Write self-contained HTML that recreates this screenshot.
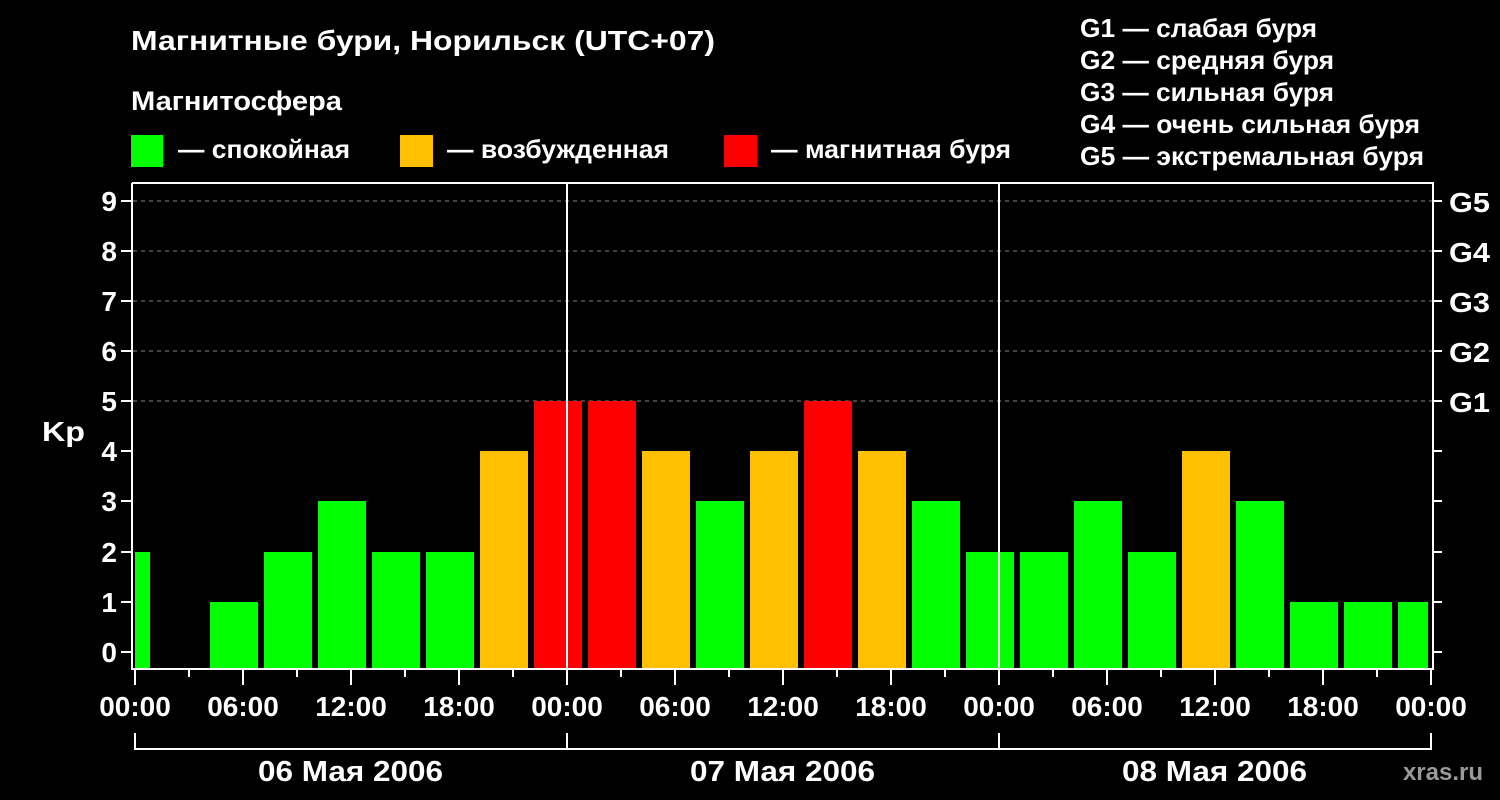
<!DOCTYPE html><html><head><meta charset="utf-8"><style>body{margin:0;background:#000;}svg{display:block}text{font-family:"Liberation Sans",sans-serif;font-weight:bold;fill:#fff}</style></head><body>
<svg width="1500" height="800" viewBox="0 0 1500 800" xmlns="http://www.w3.org/2000/svg">
<rect width="1500" height="800" fill="#000"/>
<text x="131" y="50" font-size="28" textLength="584" lengthAdjust="spacingAndGlyphs">Магнитные бури, Норильск (UTC+07)</text>
<text x="131" y="110" font-size="27" textLength="211" lengthAdjust="spacingAndGlyphs">Магнитосфера</text>
<rect x="131" y="135" width="32" height="32" fill="#00ff00"/><text x="178" y="158" font-size="26" textLength="172" lengthAdjust="spacingAndGlyphs">— спокойная</text>
<rect x="400" y="135" width="33" height="32" fill="#ffc000"/><text x="447" y="158" font-size="26" textLength="222" lengthAdjust="spacingAndGlyphs">— возбужденная</text>
<rect x="724" y="135" width="33" height="32" fill="#ff0000"/><text x="771" y="158" font-size="26" textLength="240" lengthAdjust="spacingAndGlyphs">— магнитная буря</text>
<g font-size="26"><text x="1080" y="37" textLength="237" lengthAdjust="spacingAndGlyphs">G1 — слабая буря</text><text x="1080" y="69" textLength="254" lengthAdjust="spacingAndGlyphs">G2 — средняя буря</text><text x="1080" y="101" textLength="254" lengthAdjust="spacingAndGlyphs">G3 — сильная буря</text><text x="1080" y="133" textLength="340" lengthAdjust="spacingAndGlyphs">G4 — очень сильная буря</text><text x="1080" y="165" textLength="344" lengthAdjust="spacingAndGlyphs">G5 — экстремальная буря</text></g>
<g stroke="#888" stroke-dasharray="4,4" stroke-width="1">
<line x1="133" y1="201" x2="1433" y2="201"/><line x1="133" y1="251" x2="1433" y2="251"/><line x1="133" y1="301" x2="1433" y2="301"/><line x1="133" y1="351" x2="1433" y2="351"/><line x1="133" y1="401" x2="1433" y2="401"/></g>
<g id="bars">
<rect x="135" y="552" width="15" height="116" fill="#00ff00"/>
<rect x="210" y="602" width="48" height="66" fill="#00ff00"/>
<rect x="264" y="552" width="48" height="116" fill="#00ff00"/>
<rect x="318" y="501" width="48" height="167" fill="#00ff00"/>
<rect x="372" y="552" width="48" height="116" fill="#00ff00"/>
<rect x="426" y="552" width="48" height="116" fill="#00ff00"/>
<rect x="480" y="451" width="48" height="217" fill="#ffc000"/>
<rect x="534" y="401" width="48" height="267" fill="#ff0000"/>
<rect x="588" y="401" width="48" height="267" fill="#ff0000"/>
<rect x="642" y="451" width="48" height="217" fill="#ffc000"/>
<rect x="696" y="501" width="48" height="167" fill="#00ff00"/>
<rect x="750" y="451" width="48" height="217" fill="#ffc000"/>
<rect x="804" y="401" width="48" height="267" fill="#ff0000"/>
<rect x="858" y="451" width="48" height="217" fill="#ffc000"/>
<rect x="912" y="501" width="48" height="167" fill="#00ff00"/>
<rect x="966" y="552" width="48" height="116" fill="#00ff00"/>
<rect x="1020" y="552" width="48" height="116" fill="#00ff00"/>
<rect x="1074" y="501" width="48" height="167" fill="#00ff00"/>
<rect x="1128" y="552" width="48" height="116" fill="#00ff00"/>
<rect x="1182" y="451" width="48" height="217" fill="#ffc000"/>
<rect x="1236" y="501" width="48" height="167" fill="#00ff00"/>
<rect x="1290" y="602" width="48" height="66" fill="#00ff00"/>
<rect x="1344" y="602" width="48" height="66" fill="#00ff00"/>
<rect x="1398" y="602" width="30" height="66" fill="#00ff00"/>
</g>
<g stroke="#fff" stroke-width="2" fill="none">
<path d="M132 183V669H1433V183H132"/>
<line x1="567" y1="183" x2="567" y2="668"/><line x1="999" y1="183" x2="999" y2="668"/>
<path d="M121 201H132M121 251H132M121 301H132M121 351H132M121 401H132M121 451H132M121 501H132M121 552H132M121 602H132M121 652H132"/>
<path d="M1433 201H1442M1433 251H1442M1433 301H1442M1433 351H1442M1433 401H1442M1433 451H1442M1433 501H1442M1433 552H1442M1433 602H1442M1433 652H1442"/>
<path d="M135 670V685M189 670V677M243 670V685M297 670V677M351 670V685M405 670V677M459 670V685M513 670V677M567 670V685M621 670V677M675 670V685M729 670V677M783 670V685M837 670V677M891 670V685M945 670V677M999 670V685M1053 670V677M1107 670V685M1161 670V677M1215 670V685M1269 670V677M1323 670V685M1377 670V677M1431 670V685"/>
<path d="M135 733V749H1431V733M567 733V749M999 733V749"/>
</g>
<g font-size="28" text-anchor="end"><text x="117" y="211">9</text><text x="117" y="261">8</text><text x="117" y="311">7</text><text x="117" y="361">6</text><text x="117" y="411">5</text><text x="117" y="461">4</text><text x="117" y="511">3</text><text x="117" y="562">2</text><text x="117" y="612">1</text><text x="117" y="662">0</text></g>
<text x="42" y="441" font-size="28" textLength="43" lengthAdjust="spacingAndGlyphs">Kp</text>
<g font-size="28"><text x="1449" y="212" textLength="41" lengthAdjust="spacingAndGlyphs">G5</text><text x="1449" y="262" textLength="41" lengthAdjust="spacingAndGlyphs">G4</text><text x="1449" y="312" textLength="41" lengthAdjust="spacingAndGlyphs">G3</text><text x="1449" y="362" textLength="41" lengthAdjust="spacingAndGlyphs">G2</text><text x="1449" y="412" textLength="41" lengthAdjust="spacingAndGlyphs">G1</text></g>
<g font-size="28" text-anchor="middle"><text x="135" y="716">00:00</text><text x="243" y="716">06:00</text><text x="351" y="716">12:00</text><text x="459" y="716">18:00</text><text x="567" y="716">00:00</text><text x="675" y="716">06:00</text><text x="783" y="716">12:00</text><text x="891" y="716">18:00</text><text x="999" y="716">00:00</text><text x="1107" y="716">06:00</text><text x="1215" y="716">12:00</text><text x="1323" y="716">18:00</text><text x="1431" y="716">00:00</text></g>
<g font-size="29"><text x="258" y="781" textLength="185" lengthAdjust="spacingAndGlyphs">06 Мая 2006</text><text x="690" y="781" textLength="185" lengthAdjust="spacingAndGlyphs">07 Мая 2006</text><text x="1122" y="781" textLength="185" lengthAdjust="spacingAndGlyphs">08 Мая 2006</text></g>
<text x="1483" y="780" font-size="24" text-anchor="end" style="fill:#999">xras.ru</text>
</svg></body></html>
